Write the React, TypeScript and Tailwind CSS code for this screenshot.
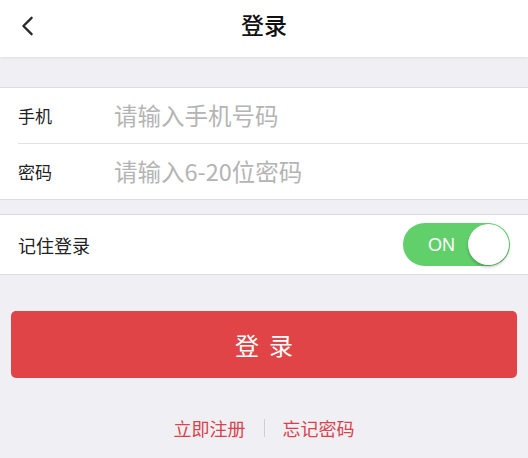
import { useState } from 'react'

function App() {
  const [remember, setRemember] = useState(true)

  return (
    <div className="min-h-[458px] w-[528px] bg-[#efeff4] font-['Noto_Sans_CJK_SC',sans-serif] text-[#222]">
      <header className="relative flex h-[57px] items-center justify-center bg-white pb-[8px] shadow-[0_1px_3px_rgba(0,0,0,0.08)]">
        <button className="absolute left-[17px] top-[14px] flex h-[24px] w-[20px] items-center justify-center" aria-label="返回">
          <svg viewBox="0 0 14 22" className="h-[20px] w-[13px]" fill="none" stroke="#2b2b2b" strokeWidth="2.6" strokeLinecap="round" strokeLinejoin="round">
            <path d="M11.5 2 2.5 11l9 9" />
          </svg>
        </button>
        <h1 className="text-[23px] font-medium leading-none text-[#111]">登录</h1>
      </header>

      <div className="mt-[30px] border-y border-[#dcdce0] bg-white">
        <div className="flex h-[55px] items-center pl-[18px]">
          <span className="w-[96px] text-[17px] leading-none">手机</span>
          <span className="text-[23.5px] leading-none text-[#b4b4b4]">请输入手机号码</span>
        </div>
        <div className="ml-[18px] h-px bg-[#e2e2e6]" />
        <div className="flex h-[55px] items-center pl-[18px]">
          <span className="w-[96px] text-[17px] leading-none">密码</span>
          <span className="text-[23.5px] leading-none text-[#b4b4b4]">请输入6-20位密码</span>
        </div>
      </div>

      <div className="mt-[14px] flex h-[61px] items-center justify-between border-y border-[#dcdce0] bg-white pl-[18px] pr-[18px]">
        <span className="text-[18px] leading-none">记住登录</span>
        <button
          onClick={() => setRemember(!remember)}
          className="relative flex h-[43px] w-[107px] items-center rounded-full bg-[#61d06a] pl-[25px]"
        >
          <span className="text-[18px] leading-none text-white font-['Liberation_Sans',sans-serif]">ON</span>
          <span className="absolute right-[1px] top-[1px] h-[41px] w-[41px] rounded-full bg-white shadow-[0_2px_3px_rgba(0,0,0,0.25)]" />
        </button>
      </div>

      <div className="px-[11px] pt-[36px]">
        <button className="flex h-[67px] w-full items-center justify-center gap-[10px] rounded-[5px] bg-[#e04446] text-[24px] leading-none text-white">
          <span>登</span>
          <span>录</span>
        </button>
      </div>

      <div className="mt-[41px] flex items-center justify-center gap-[18px] text-[18px] leading-none text-[#d8434c]">
        <span>立即注册</span>
        <span className="h-[18px] w-px bg-[#cfcfd3]" />
        <span>忘记密码</span>
      </div>
    </div>
  )
}

export default App
